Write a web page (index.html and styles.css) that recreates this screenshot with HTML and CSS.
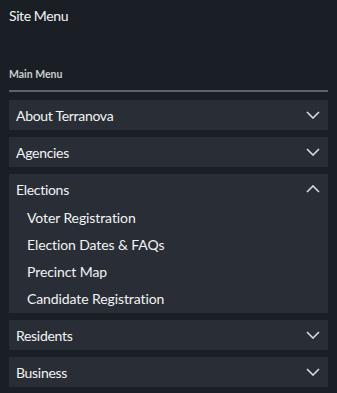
FILE: index.html
```html
<!DOCTYPE html>
<html lang="en">
<head>
    <meta charset="UTF-8">
    <meta name="viewport" content="width=device-width, initial-scale=1.0">
    <title>Site Menu</title>
    <link rel="stylesheet" href="styles.css">
</head>
<body>
    <nav class="site-menu">
        <h1 class="title">Site Menu</h1>
        <h2 class="section-label">Main Menu</h2>
        <ul class="menu">
            <li class="menu-item">
                <div class="menu-head">
                    <span>About Terranova</span>
                    <svg class="chev" viewBox="0 0 14 8"><path d="M1 1 L7 7 L13 1"/></svg>
                </div>
            </li>
            <li class="menu-item">
                <div class="menu-head">
                    <span>Agencies</span>
                    <svg class="chev" viewBox="0 0 14 8"><path d="M1 1 L7 7 L13 1"/></svg>
                </div>
            </li>
            <li class="menu-item open">
                <div class="menu-head">
                    <span>Elections</span>
                    <svg class="chev" viewBox="0 0 14 8"><path d="M1 7 L7 1 L13 7"/></svg>
                </div>
                <ul class="submenu">
                    <li>Voter Registration</li>
                    <li>Election Dates &amp; FAQs</li>
                    <li>Precinct Map</li>
                    <li>Candidate Registration</li>
                </ul>
            </li>
            <li class="menu-item">
                <div class="menu-head">
                    <span>Residents</span>
                    <svg class="chev" viewBox="0 0 14 8"><path d="M1 1 L7 7 L13 1"/></svg>
                </div>
            </li>
            <li class="menu-item">
                <div class="menu-head">
                    <span>Business</span>
                    <svg class="chev" viewBox="0 0 14 8"><path d="M1 1 L7 7 L13 1"/></svg>
                </div>
            </li>
        </ul>
    </nav>
</body>
</html>
```

FILE: styles.css
```css
*{
    margin: 0;
    padding: 0;
    box-sizing: border-box;
}
body{
    background: #1a1f26;
    color: #f2f3f4;
    font-family: Lato, 'Open Sans', sans-serif;
}
.site-menu{
    padding: 6px 9px;
}
.title{
    font-size: 14px;
    font-weight: 400;
    line-height: 20px;
    letter-spacing: -0.4px;
}
.section-label{
    margin-top: 41px;
    font-size: 10.5px;
    font-weight: 700;
    line-height: 14px;
    color: #c9ccd0;
    padding-bottom: 9px;
    border-bottom: 2px solid #5c636d;
}
.menu{
    list-style: none;
    margin-top: 8px;
    display: flex;
    flex-direction: column;
    gap: 7px;
}
.menu-item{
    background: #292e36;
}
.menu-head{
    height: 30px;
    display: flex;
    align-items: center;
    justify-content: space-between;
    padding: 0 8px 0 7px;
    font-size: 14px;
    letter-spacing: -0.3px;
}
.chev{
    width: 14px;
    height: 8px;
    fill: none;
    stroke: #d8dadd;
    stroke-width: 1.6;
}
.submenu{
    list-style: none;
    padding-left: 18px;
    padding-bottom: 1px;
}
.submenu li{
    font-size: 14px;
    line-height: 27px;
    letter-spacing: -0.1px;
}
```
